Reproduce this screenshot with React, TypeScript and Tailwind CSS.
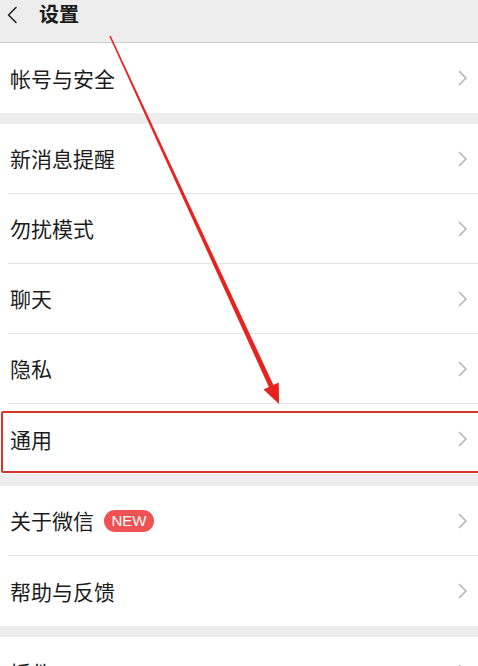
import React from 'react';

const Chevron = () => (
    <svg width="10" height="16" viewBox="0 0 10 16" className="shrink-0">
        <polyline points="1.5,1.5 8,8 1.5,14.5" fill="none" stroke="#b5b5b5" strokeWidth="1.6" strokeLinecap="round" strokeLinejoin="round" />
    </svg>
);

interface RowProps {
    label: string;
    last?: boolean;
    badge?: boolean;
    highlight?: boolean;
    extra?: React.ReactNode;
}

const Row = ({ label, last = false, badge = false, highlight = false, extra }: RowProps) => (
    <div className="relative h-[70px] bg-white">
        <div className={`ml-[8px] h-full flex items-center pr-[10px] ${last ? '' : 'border-b border-[#e6e6e6]'}`}>
            <span className="pl-[2px] text-[21px] leading-none text-[#1c1c1c]">{label}</span>
            {badge && (
                <span className="ml-[10px] h-[22px] w-[50px] rounded-full bg-[#ee5252] text-white text-[15px] leading-[22px] text-center font-['Liberation_Sans',sans-serif]">
                    NEW
                </span>
            )}
            {extra}
            <div className="flex-1" />
            <Chevron />
        </div>
        {highlight && (
            <div className="absolute left-[1px] right-[-4px] top-[7px] bottom-[1px] border-2 border-[#d8352c] rounded-[2px] pointer-events-none" />
        )}
    </div>
);

export default function App() {
    return (
        <div className="relative w-[478px] h-[666px] overflow-hidden bg-[#ededed] font-['Noto_Sans_CJK_SC','Noto_Sans',sans-serif]">
            {/* HEADER */}
            <div className="h-[43px] border-b border-[#cdcdcd] flex items-start">
                <svg width="12" height="18" viewBox="0 0 12 18" className="ml-[6px] mt-[6px]">
                    <polyline points="10,1.5 2.5,9 10,16.5" fill="none" stroke="#222" strokeWidth="1.6" strokeLinecap="round" strokeLinejoin="round" />
                </svg>
                <span className="ml-[21px] text-[20px] leading-[28px] font-bold text-[#1a1a1a]">设置</span>
            </div>

            <Row label="帐号与安全" last />

            <div className="h-[11px]" />
            <Row label="新消息提醒" />
            <Row label="勿扰模式" />
            <Row label="聊天" />
            <Row label="隐私" />
            <Row label="通用" last highlight />

            <div className="h-[12px]" />
            <Row label="关于微信" badge />
            <Row label="帮助与反馈" last />

            <div className="h-[11px]" />
            <Row
                label="插件"
                last
                extra={<span className="ml-[6px] text-[14px] text-[#c0c0c0]">☼</span>}
            />

            {/* ANNOTATION ARROW */}
            <svg className="absolute inset-0 pointer-events-none" width="478" height="666" viewBox="0 0 478 666">
                <polygon points="110.7,35.7 109.3,36.3 269.2,387.7 273.8,385.7" fill="#e8231f" />
                <polygon points="279,404 278.8,382.4 263.5,389.4" fill="#e8231f" />
            </svg>
        </div>
    );
}
